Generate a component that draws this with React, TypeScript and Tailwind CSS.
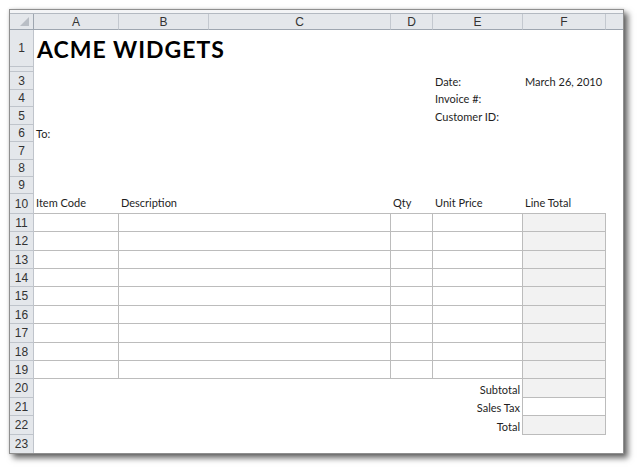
import type { ReactNode } from 'react';

const LINE = 'border-[#bcbcbc]';
const HEAD = 'bg-[#e4e7eb] text-[#333] font-[family-name:"Liberation_Sans",Arial,sans-serif] text-[12px]';
const TXT = 'font-[family-name:Lato,"Noto_Sans",sans-serif] text-[11px] leading-[13px] text-[#1e1e1e]';

const upper = ['h-[18px]', 'h-[17px]', 'h-[18px]', 'h-[17px]', 'h-[18px]', 'h-[17px]', 'h-[17px]'];
const lower = [
  'h-[18px]', 'h-[19px]', 'h-[18px]', 'h-[18px]', 'h-[19px]', 'h-[18px]',
  'h-[19px]', 'h-[18px]', 'h-[18px]', 'h-[19px]', 'h-[18px]', 'h-[19px]',
];

function Row({ h, n, children }: { h: string; n?: number; children?: ReactNode }) {
  return (
    <div className={`flex shrink-0 ${h}`}>
      <div className={`w-[24px] shrink-0 flex items-center justify-center border-r border-b border-[#bfc4cb] ${HEAD}`}>
        {n}
      </div>
      {children}
    </div>
  );
}

function Cell({ w, className = '', children }: { w: string; className?: string; children?: ReactNode }) {
  return (
    <div className={`${w} shrink-0 flex items-end px-[2px] pb-[2px] whitespace-nowrap ${TXT} ${className}`}>
      {children}
    </div>
  );
}

export default function App() {
  const cols = ['A', 'B', 'C', 'D', 'E', 'F', ''];
  const colW = ['w-[85px]', 'w-[90px]', 'w-[182px]', 'w-[42px]', 'w-[90px]', 'w-[83px]', 'w-[17px]'];

  return (
    <div className="w-[640px] h-[470px] bg-white pt-[9px] pl-[9px]">
      <div className="w-[615px] h-[445px] flex flex-col bg-white border border-[#8f8f8f] overflow-hidden shadow-[4px_4px_6px_rgba(0,0,0,0.6),0_0_3px_rgba(0,0,0,0.15)]">
        {/* window top strip */}
        <div className="h-[4px] shrink-0 bg-[#f3f4f6] border-b border-[#b3b9c1]" />

        {/* column headers */}
        <div className="flex h-[16px] shrink-0">
          <div className={`w-[24px] shrink-0 relative border-r border-b border-[#9ea6b0] ${HEAD}`}>
            <svg className="absolute right-[4px] bottom-[3px]" width="9" height="9" viewBox="0 0 9 9">
              <path d="M9 0 L9 9 L0 9 Z" fill="#b9bec5" />
            </svg>
          </div>
          {cols.map((c, i) => (
            <div
              key={i}
              className={`${colW[i]} shrink-0 flex items-center justify-center border-b border-[#9ea6b0] ${i < 6 ? 'border-r border-r-[#c3c8cf]' : ''} ${HEAD}`}
            >
              {c}
            </div>
          ))}
        </div>

        {/* row 1 */}
        <Row h="h-[37px]" n={1}>
          <div className="flex items-center pl-[3px] pt-[1px] font-[family-name:Lato,sans-serif] font-bold text-[23px] tracking-[1px] text-black whitespace-nowrap">
            ACME WIDGETS
          </div>
        </Row>

        {/* hidden row 2 */}
        <Row h="h-[5px]" />

        {upper.map((h, i) => {
          const n = i + 3;
          return (
            <Row key={n} h={h} n={n}>
              <Cell w="w-[357px]">{n === 6 ? 'To:' : ''}</Cell>
              <Cell w="w-[42px]" />
              <Cell w="w-[90px]">
                {n === 3 ? 'Date:' : n === 4 ? 'Invoice #:' : n === 5 ? 'Customer ID:' : ''}
              </Cell>
              <Cell w="w-[83px]">{n === 3 ? 'March 26, 2010' : ''}</Cell>
            </Row>
          );
        })}

        {/* row 10: table header */}
        <Row h="h-[20px]" n={10}>
          <Cell w="w-[85px]" className={`border-b ${LINE} pb-[4px]`}>Item Code</Cell>
          <Cell w="w-[272px]" className={`border-b ${LINE} pb-[4px]`}>Description</Cell>
          <Cell w="w-[42px]" className={`border-b ${LINE} pb-[4px]`}>Qty</Cell>
          <Cell w="w-[90px]" className={`border-b ${LINE} pb-[4px]`}>Unit Price</Cell>
          <Cell w="w-[83px]" className={`border-b ${LINE} pb-[4px]`}>Line Total</Cell>
        </Row>

        {lower.map((h, i) => {
          const n = i + 11;
          if (n <= 19) {
            return (
              <Row key={n} h={h} n={n}>
                <Cell w="w-[85px]" className={`border-r border-b ${LINE}`} />
                <Cell w="w-[272px]" className={`border-r border-b ${LINE}`} />
                <Cell w="w-[42px]" className={`border-r border-b ${LINE}`} />
                <Cell w="w-[90px]" className={`border-r border-b ${LINE}`} />
                <Cell w="w-[83px]" className={`border-r border-b ${LINE} bg-[#f2f2f2]`} />
              </Row>
            );
          }
          const label = n === 20 ? 'Subtotal' : n === 21 ? 'Sales Tax' : 'Total';
          return (
            <Row key={n} h={h} n={n}>
              <Cell w="w-[399px]" />
              <Cell w="w-[90px]" className={`border-r ${LINE} justify-end`}>{label}</Cell>
              <Cell w="w-[83px]" className={`border-r border-b ${LINE} ${n === 21 ? 'bg-white' : 'bg-[#f2f2f2]'}`} />
            </Row>
          );
        })}

        <Row h="flex-1" n={23} />
      </div>
    </div>
  );
}
